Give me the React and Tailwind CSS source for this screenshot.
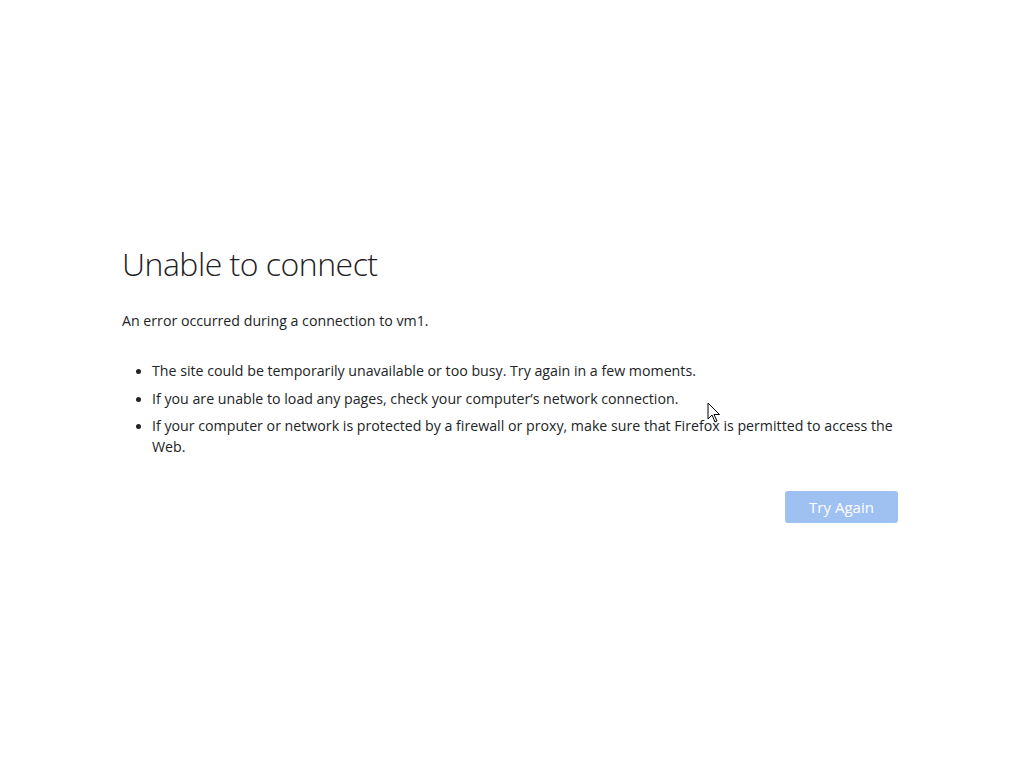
export default function App() {
  return (
    <div className="relative w-[1024px] h-[768px] bg-white text-[#222426]" style={{ fontFamily: '"Open Sans", "Noto Sans", sans-serif' }}>
      <div className="absolute left-0 top-0 w-full">
        <div className="w-[776px] pt-[244px] ml-[122px]">
          <h1 className="text-[32px] font-light leading-[40px] tracking-[-0.5px] text-[#1f2123]">Unable to connect</h1>
          <p className="mt-[27px] text-[14.2px] leading-[20px]">An error occurred during a connection to vm1.</p>
          <ul className="mt-[29px] pl-[30px] text-[14.2px] leading-[21px] list-disc marker:text-[13px]">
            <li className="mb-[7px] pl-[-2px]">The site could be temporarily unavailable or too busy. Try again in a few moments.</li>
            <li className="mb-[6px]">If you are unable to load any pages, check your computer’s network connection.</li>
            <li>If your computer or network is protected by a firewall or proxy, make sure that Firefox is permitted to access the Web.</li>
          </ul>
          <div className="flex justify-end mt-[34px]">
            <button className="w-[113px] h-[32px] rounded-[3px] bg-[#9ec1f2] text-white text-[15px]">Try Again</button>
          </div>
        </div>
      </div>
      <svg className="absolute left-[707px] top-[402px]" width="14" height="22" viewBox="0 0 14 22">
        <path d="M1 1 L1 17 L5 13 L8 20 L10 19 L7 12.5 L12.5 12.5 Z" fill="white" stroke="black" strokeWidth="1" strokeLinejoin="miter" />
      </svg>
    </div>
  );
}
